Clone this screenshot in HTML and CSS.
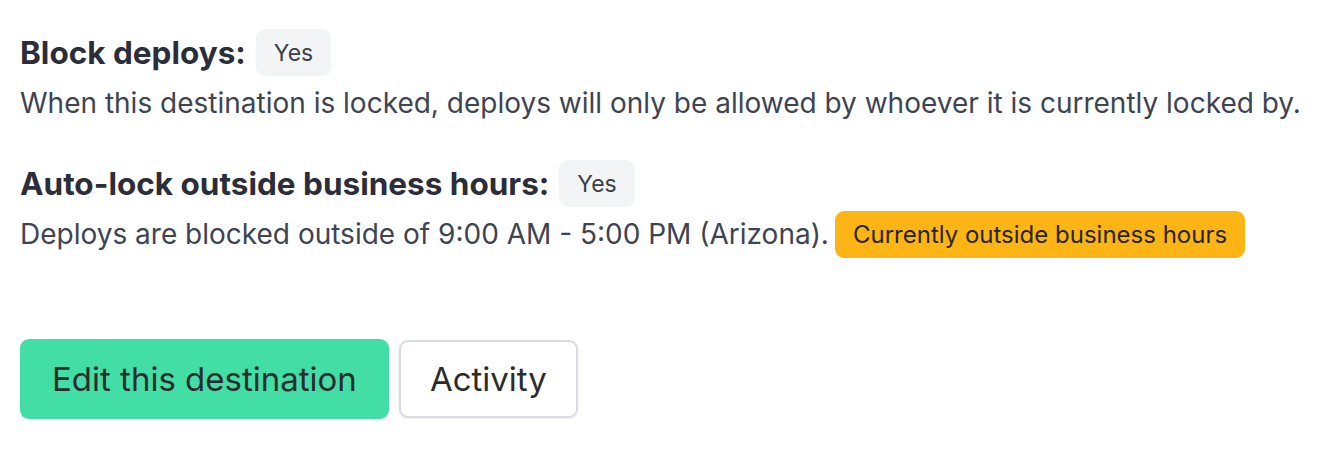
FILE: index.html
```html
<!DOCTYPE html>
<html>
<head>
<meta charset="utf-8">
<link rel="stylesheet" href="styles.css">
</head>
<body>
<div class="page">
  <div class="setting">
    <div class="setting-head">
      <span class="label">Block deploys:</span>
      <span class="badge">Yes</span>
    </div>
    <p class="desc">When this destination is locked, deploys will only be allowed by whoever it is currently locked by.</p>
  </div>
  <div class="setting">
    <div class="setting-head">
      <span class="label">Auto-lock outside business hours:</span>
      <span class="badge">Yes</span>
    </div>
    <p class="desc desc-badged">Deploys are blocked outside of 9:00 AM - 5:00 PM (Arizona). <span class="badge badge-warn">Currently outside business hours</span></p>
  </div>
  <div class="actions">
    <button class="btn btn-primary">Edit this destination</button>
    <button class="btn btn-secondary">Activity</button>
  </div>
</div>
</body>
</html>
```

FILE: styles.css
```css
html, body {
  margin: 0;
  padding: 0;
  background: #ffffff;
}
body {
  font-family: Inter, "Noto Sans", sans-serif;
  color: #3e4452;
}
.page {
  padding: 29px 20px 0 20px;
  display: flex;
  flex-direction: column;
}
.setting {
  display: flex;
  flex-direction: column;
  margin-bottom: 37px;
}
.setting-head {
  display: flex;
  align-items: center;
  gap: 10px;
}
.label {
  font-size: 31.5px;
  line-height: 38px;
  font-weight: 700;
  color: #2b2e39;
}
.badge {
  display: inline-flex;
  align-items: center;
  height: 47px;
  box-sizing: border-box;
  padding: 0 18px;
  border-radius: 9px;
  background: #f3f4f6;
  color: #3a3f4b;
  font-size: 23px;
}
.desc {
  margin: 7px 0 0;
  font-size: 28px;
  line-height: 40px;
  display: flex;
  align-items: center;
}
.desc-badged {
  margin-top: 4px;
  line-height: 47px;
}
.badge-warn {
  margin-left: 6px;
  background: #fcb514;
  color: #2a2416;
  padding: 0 18px;
  font-size: 24px;
}
.actions {
  display: flex;
  gap: 10px;
  margin-top: 44px;
}
.btn {
  font-family: Inter, "Noto Sans", sans-serif;
  font-size: 33px;
  height: 80px;
  border-radius: 9px;
  color: #2b2c2e;
  padding: 0 32px;
  cursor: pointer;
}
.btn-primary {
  background: #42dea6;
  border: none;
}
.btn-secondary {
  background: #ffffff;
  border: 2px solid #d9dbe2;
  box-shadow: 0 1px 3px rgba(0,0,0,0.08);
  height: 78px;
  margin-top: 1px;
  padding: 0 29px;
}
```
